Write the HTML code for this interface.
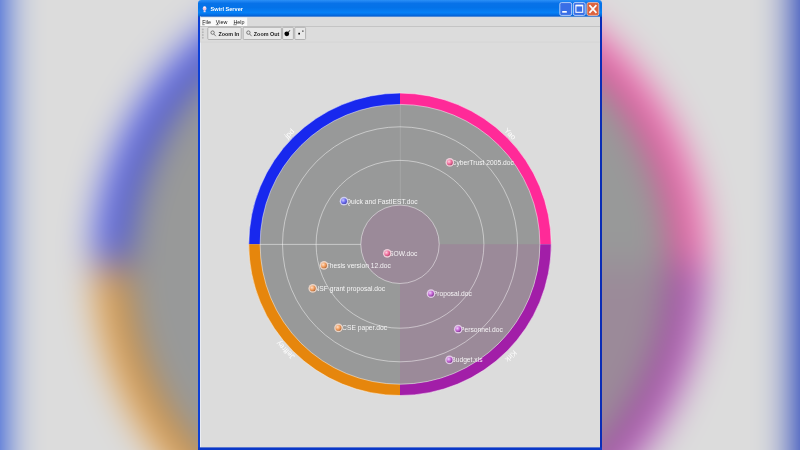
<!DOCTYPE html>
<html><head><meta charset="utf-8"><title>Swirl Server</title>
<style>
html,body{margin:0;padding:0;background:#dcdcdc;overflow:hidden}
svg{display:block}
text{font-family:"Liberation Sans",sans-serif}
</style></head><body>
<svg width="800" height="450" viewBox="0 0 800 450">
<defs>
<filter id="bl" color-interpolation-filters="sRGB" filterUnits="userSpaceOnUse" x="-250" y="-450" width="1300" height="1400"><feGaussianBlur stdDeviation="19"/></filter>
<linearGradient id="tb" x1="0" y1="0" x2="0" y2="1">
<stop offset="0" stop-color="#2c90f6"/><stop offset="0.1" stop-color="#1a80f0"/><stop offset="0.2" stop-color="#0872e8"/><stop offset="0.45" stop-color="#0472e8"/><stop offset="0.75" stop-color="#0680f6"/><stop offset="0.9" stop-color="#046ae0"/><stop offset="1" stop-color="#0250bc"/>
</linearGradient>
<radialGradient id="gB" cx="0.35" cy="0.35" r="0.7"><stop offset="0" stop-color="#c8c8ff"/><stop offset="0.6" stop-color="#6a6af0"/><stop offset="1" stop-color="#4a4ab0"/></radialGradient>
<radialGradient id="gP" cx="0.35" cy="0.35" r="0.7"><stop offset="0" stop-color="#ffd0e0"/><stop offset="0.6" stop-color="#f06a9a"/><stop offset="1" stop-color="#b04a70"/></radialGradient>
<radialGradient id="gO" cx="0.35" cy="0.35" r="0.7"><stop offset="0" stop-color="#ffe0c8"/><stop offset="0.6" stop-color="#f09a5a"/><stop offset="1" stop-color="#b06a3a"/></radialGradient>
<radialGradient id="gV" cx="0.35" cy="0.35" r="0.7"><stop offset="0" stop-color="#f0d0ff"/><stop offset="0.6" stop-color="#c060d0"/><stop offset="1" stop-color="#803a90"/></radialGradient>
<g id="disc">
<path d="M400 244.3L400 93A151.3 151.3 0 0 0 248.7 244.3Z" fill="#1828ee"/>
<path d="M400 244.3L551.3 244.3A151.3 151.3 0 0 0 400 93Z" fill="#ff2a98"/>
<path d="M400 244.3L248.7 244.3A151.3 151.3 0 0 0 400 395.6Z" fill="#e6860c"/>
<path d="M400 244.3L400 395.6A151.3 151.3 0 0 0 551.3 244.3Z" fill="#a21ea8"/>
<circle cx="400" cy="244.3" r="139.9" fill="#989999"/>
<path d="M400 244.3L400 384.2A139.9 139.9 0 0 0 539.9 244.3Z" fill="#9b8a99"/>
<circle cx="400" cy="244.3" r="39.2" fill="#9b8a99"/>
</g>
<g id="chrome">
<path d="M198 450V3.4A3.4 3.4 0 0 1 201.4 0H598.6A3.4 3.4 0 0 1 602 3.4V450Z" fill="#dcdcdc"/>
<rect x="198" y="4" width="2" height="446" fill="#0c3fd6"/>
<rect x="600" y="4" width="2" height="446" fill="#0a2cb6"/>
<path d="M198 16.9V3.4A3.4 3.4 0 0 1 201.4 0H598.6A3.4 3.4 0 0 1 602 3.4V16.9Z" fill="url(#tb)"/>
<rect x="200" y="16.5" width="0.8" height="431" fill="#eef2fc"/>
<rect x="198" y="447.4" width="404" height="2.6" fill="#0a38c8"/>
</g>
</defs>
<!-- blurred backdrop -->
<g filter="url(#bl)">
<g transform="translate(400 265.5) scale(1.99) translate(-400 -244.3)">
<rect x="100" y="-100" width="600" height="650" fill="#dcdcdc"/>
<use href="#chrome"/>
<rect x="140" y="-100" width="60" height="650" fill="#0c3fd6"/>
<rect x="598.6" y="-100" width="60" height="650" fill="#0a2cb6"/>
<use href="#disc"/>
</g>
</g>
<!-- window -->
<use href="#chrome"/>
<use href="#disc"/>
<g fill="none" stroke="#ffffff" stroke-opacity="0.68" stroke-width="0.7">
<circle cx="400" cy="244.3" r="151.2"/>
<circle cx="400" cy="244.3" r="139.9"/>
<circle cx="400" cy="244.3" r="117.5"/>
<circle cx="400" cy="244.3" r="83.9"/>
<circle cx="400" cy="244.3" r="39.2"/>
<path d="M260 244.4H360.8"/>
</g>
<path d="M400.3 104.5V204.3" stroke="#ffffff" stroke-opacity="0.22" stroke-width="0.6" fill="none"/>
<g id="labels" font-size="6.7" fill="#ffffff" opacity="0.9">
<text x="451.60" y="164.90">CyberTrust 2005.doc</text>
<text x="345.75" y="203.65">Quick and FastIEST.doc</text>
<text x="389.00" y="255.90">SOW.doc</text>
<text x="325.75" y="267.90">Thesis version 12.doc</text>
<text x="314.50" y="290.90">NSF grant proposal.doc</text>
<text x="432.75" y="296.15">Proposal.doc</text>
<text x="340.25" y="330.40">ICSE paper.doc</text>
<text x="460.00" y="331.65">Personnel.doc</text>
<text x="451.25" y="362.40">Budget.xls</text>
</g>
<g id="nodes">
<circle cx="450.15" cy="162.80" r="4.1" fill="#5a5a5a" fill-opacity="0.25"/><circle cx="449.85" cy="162.40" r="4.3" fill="#f6d4e0" fill-opacity="0.9"/><circle cx="449.85" cy="162.40" r="2.95" fill="url(#gP)"/>
<circle cx="344.30" cy="201.55" r="4.1" fill="#5a5a5a" fill-opacity="0.25"/><circle cx="344.00" cy="201.15" r="4.3" fill="#d6d6f8" fill-opacity="0.9"/><circle cx="344.00" cy="201.15" r="2.95" fill="url(#gB)"/>
<circle cx="387.55" cy="253.80" r="4.1" fill="#5a5a5a" fill-opacity="0.25"/><circle cx="387.25" cy="253.40" r="4.3" fill="#f6d4e0" fill-opacity="0.9"/><circle cx="387.25" cy="253.40" r="2.95" fill="url(#gP)"/>
<circle cx="324.30" cy="265.80" r="4.1" fill="#5a5a5a" fill-opacity="0.25"/><circle cx="324.00" cy="265.40" r="4.3" fill="#f4dccc" fill-opacity="0.9"/><circle cx="324.00" cy="265.40" r="2.95" fill="url(#gO)"/>
<circle cx="313.05" cy="288.80" r="4.1" fill="#5a5a5a" fill-opacity="0.25"/><circle cx="312.75" cy="288.40" r="4.3" fill="#f4dccc" fill-opacity="0.9"/><circle cx="312.75" cy="288.40" r="2.95" fill="url(#gO)"/>
<circle cx="431.30" cy="294.05" r="4.1" fill="#5a5a5a" fill-opacity="0.25"/><circle cx="431.00" cy="293.65" r="4.3" fill="#ead0f0" fill-opacity="0.9"/><circle cx="431.00" cy="293.65" r="2.95" fill="url(#gV)"/>
<circle cx="338.80" cy="328.30" r="4.1" fill="#5a5a5a" fill-opacity="0.25"/><circle cx="338.50" cy="327.90" r="4.3" fill="#f4dccc" fill-opacity="0.9"/><circle cx="338.50" cy="327.90" r="2.95" fill="url(#gO)"/>
<circle cx="458.55" cy="329.55" r="4.1" fill="#5a5a5a" fill-opacity="0.25"/><circle cx="458.25" cy="329.15" r="4.3" fill="#ead0f0" fill-opacity="0.9"/><circle cx="458.25" cy="329.15" r="2.95" fill="url(#gV)"/>
<circle cx="449.80" cy="360.30" r="4.1" fill="#5a5a5a" fill-opacity="0.25"/><circle cx="449.50" cy="359.90" r="4.3" fill="#ead0f0" fill-opacity="0.9"/><circle cx="449.50" cy="359.90" r="2.95" fill="url(#gV)"/>
</g>
<g id="owners" font-size="7.6" fill="#ffffff" text-anchor="middle" opacity="0.97">
<text transform="translate(291.1 135.4) rotate(-45)">jpd</text>
<text transform="translate(508.3 135.6) rotate(45)">Yao</text>
<text transform="translate(509.1 354.4) rotate(135)">Kirk</text>
<text transform="translate(287.2 348.2) rotate(225)">Jeffrey</text>
</g>
<g id="titlebar" opacity="0.99">
<ellipse cx="204.6" cy="8.6" rx="1.9" ry="2.3" fill="#f0c4dc"/><ellipse cx="204.6" cy="7.4" rx="1.2" ry="0.9" fill="#ffffff" fill-opacity="0.8"/>
<rect x="203.6" y="11" width="2" height="1.2" fill="#e8d8f0"/>
<text x="210.6" y="10.9" font-size="5.6" font-weight="bold" fill="#ffffff">Swirl Server</text>
<g stroke="#c4d8fa" stroke-width="0.9">
<rect x="559.8" y="2.6" width="11.8" height="12.8" rx="1.6" fill="#3a6ee6"/>
<rect x="573.4" y="2.6" width="11.8" height="12.8" rx="1.6" fill="#3a6ee6"/>
<rect x="587" y="2.6" width="11.8" height="12.8" rx="1.6" fill="#e0623a" stroke="#f0c0b0"/>
</g>
<rect x="562.2" y="11" width="4.6" height="1.7" fill="#ffffff"/>
<rect x="575.9" y="5.3" width="6.8" height="7" fill="none" stroke="#ffffff" stroke-width="1.1"/>
<path d="M575.9 5.6H582.7" stroke="#ffffff" stroke-width="1.6"/>
<path d="M589.4 5.2L596.4 12.8M596.4 5.2L589.4 12.8" stroke="#ffffff" stroke-width="1.7" fill="none"/>
</g>
<g id="menubar" opacity="0.99">
<rect x="200" y="16.9" width="400" height="9.5" fill="#dbdbdb"/><rect x="200" y="16.7" width="400" height="0.7" fill="#cfdcf0"/>
<rect x="200.6" y="17.5" width="46.6" height="8.5" fill="#fbfbfb"/>
<g font-size="5.4" fill="#111111">
<text x="202.2" y="23.8">File</text>
<text x="215.8" y="23.8">View</text>
<text x="233.4" y="23.8">Help</text>
</g>
<path d="M202.2 24.7H204.6M215.8 24.7H218.6M233.4 24.7H236.8" stroke="#111111" stroke-width="0.5"/>
<rect x="200" y="26" width="400" height="0.8" fill="#bebebe"/>
</g>
<g id="toolbar" opacity="0.99">
<rect x="200" y="27.1" width="400" height="14.6" fill="#dddddd"/>
<rect x="200" y="41.6" width="400" height="0.8" fill="#d2d2d2"/>
<g fill="#b8b8b8"><circle cx="202.8" cy="29.4" r="1"/><circle cx="202.8" cy="32.2" r="1"/><circle cx="202.8" cy="35" r="1"/><circle cx="202.8" cy="37.8" r="1"/></g>
<g fill="#e9e9e9" stroke="#9c9c9c" stroke-width="0.7">
<rect x="207.8" y="27.3" width="33.4" height="12.2" rx="1"/>
<rect x="243.2" y="27.3" width="38.2" height="12.2" rx="1"/>
<rect x="282.6" y="27.3" width="10.8" height="12.2" rx="1"/>
<rect x="294.8" y="27.3" width="10.8" height="12.2" rx="1"/>
</g>
<g fill="none" stroke="#333333" stroke-width="0.6">
<circle cx="212.6" cy="32.6" r="1.7"/><path d="M213.9 34L215.8 36.2"/>
<circle cx="248.4" cy="32.6" r="1.7"/><path d="M249.7 34L251.6 36.2"/>
</g>
<g font-size="5.4" font-weight="bold" fill="#1a1a1a">
<text x="218.4" y="35.6">Zoom In</text>
<text x="253.8" y="35.6">Zoom Out</text>
</g>
<circle cx="286.8" cy="33.8" r="2.4" fill="#000000"/>
<path d="M288.4 32.2L289.8 30.4" stroke="#000000" stroke-width="0.9"/>
<rect x="298.3" y="32.8" width="1.7" height="1.7" fill="#000000"/>
<rect x="302.2" y="30.6" width="1.3" height="1" fill="#000000"/>
</g>
</svg>
</body></html>
